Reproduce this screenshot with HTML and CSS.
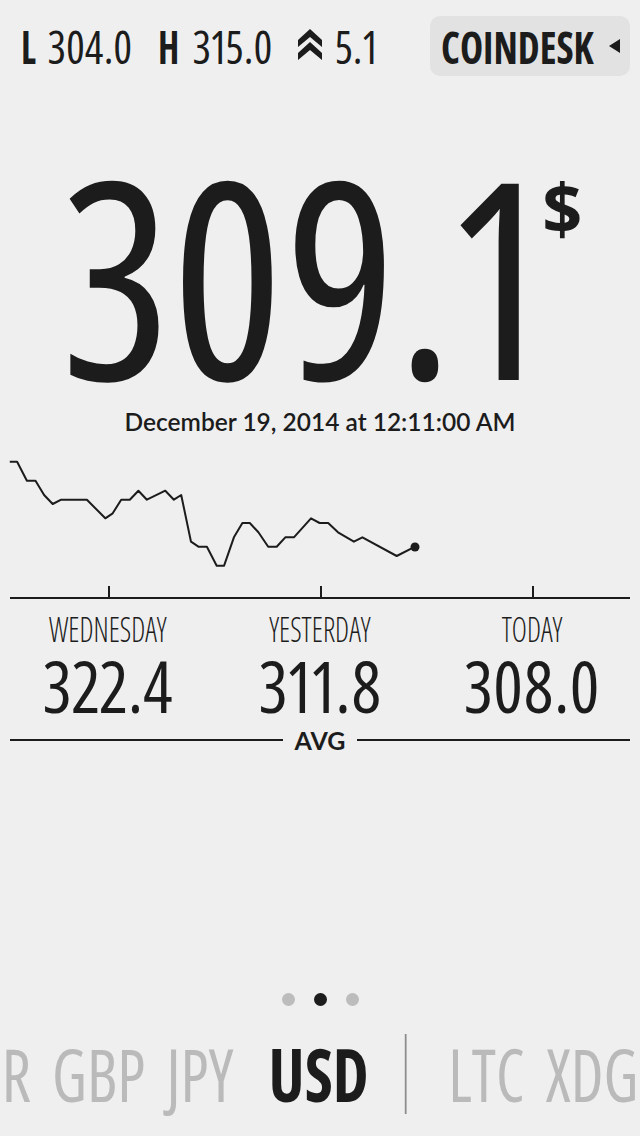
FILE: index.html
```html
<!DOCTYPE html>
<html>
<head>
<meta charset="utf-8">
<link rel="stylesheet" href="styles.css">
</head>
<body>
<div class="screen">
  <header class="topbar">
    <div class="stats">
      <div class="stat"><span class="stat-key">L</span><span class="stat-val">304.0</span></div>
      <div class="stat"><span class="stat-key">H</span><span class="stat-val">315.0</span></div>
      <div class="stat">
        <svg class="chev" width="24" height="31" viewBox="0 0 24 31">
          <polygon points="0,11 12,0 24,11 24,18 12,8 0,18" fill="#1c1c1c"/>
          <polygon points="0,24 12,13 24,24 24,31 12,21 0,31" fill="#1c1c1c"/>
        </svg>
        <span class="stat-val">5.1</span>
      </div>
    </div>
    <div class="source">
      <span class="source-name">COINDESK</span>
      <span class="source-tri"></span>
    </div>
  </header>

  <section class="price">
    <span class="price-num">309.1</span><span class="price-cur">$</span>
  </section>
  <div class="date">December 19, 2014 at 12:11:00 AM</div>

  <svg class="chart" width="640" height="150" viewBox="0 452 640 150">
    <polyline fill="none" stroke="#1c1c1c" stroke-width="2" stroke-linejoin="round"
      points="9.8,461.7 17.1,461.7 26.9,480.7 35.5,480.7 44.1,495 52.7,504 61.2,499.7 86.9,499.7 105.3,518.3 112.7,513.3 121.2,499.7 129.8,499.7 138.4,490.7 146.9,499.7 165.3,490.7 173.9,499.7 181.2,495 191,541.7 198.4,546.7 206.9,546.7 216.7,565.7 224.1,565.7 233.9,537.3 242.4,523 249.8,523 258.4,532.3 268.2,546.7 276.7,546.7 285.3,537.3 293.9,537.3 311,518.3 319.6,523 328.2,523 338,532.3 353.9,541.7 362.4,537.3 396.7,556 415.1,546.7"/>
    <circle cx="415" cy="547" r="4.5" fill="#1c1c1c"/>
    <line x1="10" y1="598" x2="630" y2="598" stroke="#1c1c1c" stroke-width="2"/>
    <line x1="109" y1="586" x2="109" y2="598" stroke="#1c1c1c" stroke-width="2"/>
    <line x1="321" y1="586" x2="321" y2="598" stroke="#1c1c1c" stroke-width="2"/>
    <line x1="533" y1="586" x2="533" y2="598" stroke="#1c1c1c" stroke-width="2"/>
  </svg>

  <div class="days">
    <div class="day"><span class="day-name">WEDNESDAY</span><span class="day-val">322.4</span></div>
    <div class="day"><span class="day-name">YESTERDAY</span><span class="day-val">311.8</span></div>
    <div class="day"><span class="day-name">TODAY</span><span class="day-val">308.0</span></div>
  </div>

  <div class="avg"><span class="avg-line"></span><span class="avg-label">AVG</span><span class="avg-line"></span></div>

  <div class="pager"><span class="dot"></span><span class="dot active"></span><span class="dot"></span></div>

  <nav class="currencies">
    <div class="cur-track">
      <span class="cur">R</span>
      <span class="cur">GBP</span>
      <span class="cur cur-jpy">JPY</span>
      <span class="cur active">USD</span>
      <span class="cur-sep"></span>
      <span class="cur">LTC</span>
      <span class="cur">XDG</span>
    </div>
  </nav>
</div>
</body>
</html>
```
FILE: styles.css
```css
html, body {
  margin: 0;
  padding: 0;
  background: #efefef;
}
body {
  color: #1c1c1c;
  font-family: "Open Sans", sans-serif;
  font-stretch: 75%;
  font-variant-numeric: proportional-nums;
}
.screen {
  width: 640px;
  height: 1136px;
  overflow: hidden;
  display: flex;
  flex-direction: column;
}

/* top bar */
.topbar {
  display: flex;
  justify-content: space-between;
  align-items: center;
  padding: 16px 10px 0 21px;
  height: 60px;
}
.stats {
  display: flex;
  align-items: center;
  gap: 26px;
}
.stat {
  display: flex;
  align-items: center;
  gap: 13px;
  font-size: 46px;
  line-height: 46px;
}
.stat-key {
  display: inline-block;
  font-weight: 700;
  transform: scaleX(0.8);
  transform-origin: left center;
  margin-right: -5px;
}
.stat-val {
  display: inline-block;
  font-weight: 400;
  transform: scaleX(0.95);
  transform-origin: left center;
  margin-right: -4px;
}
.chev {
  display: block;
  margin-top: -4px;
}
.source {
  width: 200px;
  height: 60px;
  box-sizing: border-box;
  padding: 0 10px 0 11px;
  background: #e2e2e2;
  border-radius: 10px;
  display: flex;
  align-items: center;
  gap: 16px;
}
.source-name {
  display: inline-block;
  font-size: 45px;
  line-height: 45px;
  font-weight: 700;
  transform: scaleX(0.87);
  transform-origin: left center;
  margin-right: -23px;
}
.source-tri {
  width: 0;
  height: 0;
  border-top: 7px solid transparent;
  border-bottom: 7px solid transparent;
  border-right: 11px solid #1c1c1c;
}

/* big price */
.price {
  margin-top: 78px;
  padding-left: 12px;
  display: flex;
  justify-content: center;
  align-items: flex-start;
  height: 240px;
}
.price-num {
  display: inline-block;
  font-size: 275px;
  line-height: 240px;
  font-weight: 400;
  transform: scaleX(0.95);
  transform-origin: center;
  margin: 0 -19px;
}
.price-cur {
  font-size: 70px;
  line-height: 70px;
  font-stretch: 100%;
  font-weight: 700;
  margin-top: 18px;
  margin-left: 6px;
}
.date {
  margin-top: 16px;
  text-align: center;
  font-family: Lato, sans-serif;
  font-stretch: normal;
  font-variant-numeric: normal;
  font-weight: 600;
  font-size: 24.5px;
  line-height: 24px;
}

/* chart */
.chart {
  display: block;
  margin-top: 18px;
}

/* day averages */
.days {
  margin-top: 9px;
  padding: 0 2px;
  display: grid;
  grid-template-columns: repeat(3, 1fr);
}
.day {
  display: flex;
  flex-direction: column;
  align-items: center;
}
.day-name {
  display: inline-block;
  font-size: 35px;
  line-height: 35px;
  font-weight: 300;
  transform: scaleX(0.82);
}
.day-val {
  display: inline-block;
  margin-top: 10px;
  font-size: 71px;
  line-height: 60px;
  font-weight: 400;
  transform: scaleX(0.98);
}
.avg {
  margin-top: 12px;
  padding: 0 10px;
  height: 24px;
  display: flex;
  align-items: center;
  gap: 12px;
}
.avg-line {
  flex: 1;
  height: 2px;
  background: #1c1c1c;
}
.avg-label {
  font-family: Lato, sans-serif;
  font-stretch: normal;
  font-weight: 700;
  font-size: 25px;
  line-height: 24px;
}

/* pager */
.pager {
  margin-top: 241px;
  display: flex;
  justify-content: center;
  gap: 19px;
}
.dot {
  width: 13px;
  height: 13px;
  border-radius: 50%;
  background: #bcbcbc;
}
.dot.active {
  background: #1c1c1c;
}

/* currency strip */
.currencies {
  margin-top: 28px;
  width: 640px;
  height: 80px;
}
.cur-track {
  width: 727px;
  height: 80px;
  display: flex;
  align-items: center;
  gap: 24px;
  padding-left: 2px;
  box-sizing: border-box;
  transform: scaleX(0.88);
  transform-origin: left center;
}
.cur {
  font-size: 73px;
  line-height: 80px;
  font-weight: 400;
  color: #bababa;
}
.cur.active {
  color: #1c1c1c;
  font-weight: 700;
}
.cur-jpy {
  margin-right: 16px;
}
.cur-sep {
  width: 2.3px;
  height: 80px;
  background: #8c8c8c;
  margin: 0 23px 0 17px;
}
```
